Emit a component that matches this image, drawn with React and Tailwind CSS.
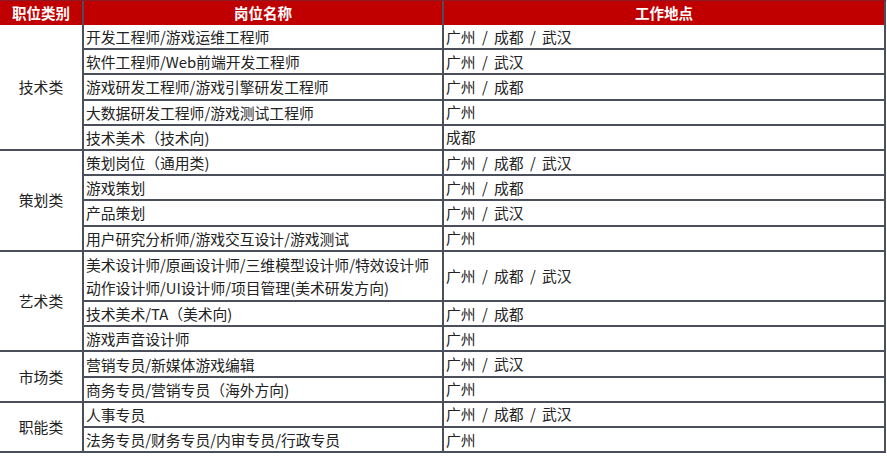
import React from "react";

const groups = [
  {
    name: "技术类",
    rows: [
      ["开发工程师/游戏运维工程师", "广州 / 成都 / 武汉"],
      ["软件工程师/Web前端开发工程师", "广州 / 武汉"],
      ["游戏研发工程师/游戏引擎研发工程师", "广州 / 成都"],
      ["大数据研发工程师/游戏测试工程师", "广州"],
      ["技术美术（技术向)", "成都"],
    ],
  },
  {
    name: "策划类",
    rows: [
      ["策划岗位（通用类)", "广州 / 成都 / 武汉"],
      ["游戏策划", "广州 / 成都"],
      ["产品策划", "广州 / 武汉"],
      ["用户研究分析师/游戏交互设计/游戏测试", "广州"],
    ],
  },
  {
    name: "艺术类",
    rows: [
      ["美术设计师/原画设计师/三维模型设计师/特效设计师\n动作设计师/UI设计师/项目管理(美术研发方向)", "广州 / 成都 / 武汉"],
      ["技术美术/TA（美术向)", "广州 / 成都"],
      ["游戏声音设计师", "广州"],
    ],
  },
  {
    name: "市场类",
    rows: [
      ["营销专员/新媒体游戏编辑", "广州 / 武汉"],
      ["商务专员/营销专员（海外方向)", "广州"],
    ],
  },
  {
    name: "职能类",
    rows: [
      ["人事专员", "广州 / 成都 / 武汉"],
      ["法务专员/财务专员/内审专员/行政专员", "广州"],
    ],
  },
];

const font = { fontFamily: '"Noto Sans CJK SC", "Liberation Sans", sans-serif' };

export default function App() {
  return (
    <div className="w-[887px] h-[456px] bg-white text-[#222] text-[14.8px] leading-[20px]" style={font}>
      <div className="w-[886px]">
        {/* header */}
        <div className="flex h-[25px] bg-[#c00000] border-t border-[#8b1a24] text-white font-bold text-[14.5px]">
          <div className="w-[82px] flex items-center justify-center">职位类别</div>
          <div className="w-[360px] border-l-2 border-[#4b4f5c] flex items-center justify-center">岗位名称</div>
          <div className="flex-1 border-l-2 border-r-2 border-[#4b4f5c] flex items-center justify-center">工作地点</div>
        </div>

        {groups.map((g) => (
          <div key={g.name} className="flex">
            <div className="w-[82px] border-b-2 border-[#4b4f5c] flex items-center justify-center">{g.name}</div>
            <div className="flex-1 border-l-2 border-[#4b4f5c]">
              {g.rows.map(([job, loc]) => {
                const tall = job.includes("\n");
                return (
                  <div
                    key={job}
                    className={"flex border-b-2 border-[#4b4f5c] " + (tall ? "h-[50.4px]" : "h-[25.2px]")}
                  >
                    <div className="w-[358px] pl-[2px] flex flex-col justify-center whitespace-pre leading-[23px]">{job}</div>
                    <div className="flex-1 border-l-2 border-r-2 border-[#4b4f5c] pl-[2px] flex items-center [word-spacing:3px]">
                      {loc}
                    </div>
                  </div>
                );
              })}
            </div>
          </div>
        ))}
      </div>
    </div>
  );
}
